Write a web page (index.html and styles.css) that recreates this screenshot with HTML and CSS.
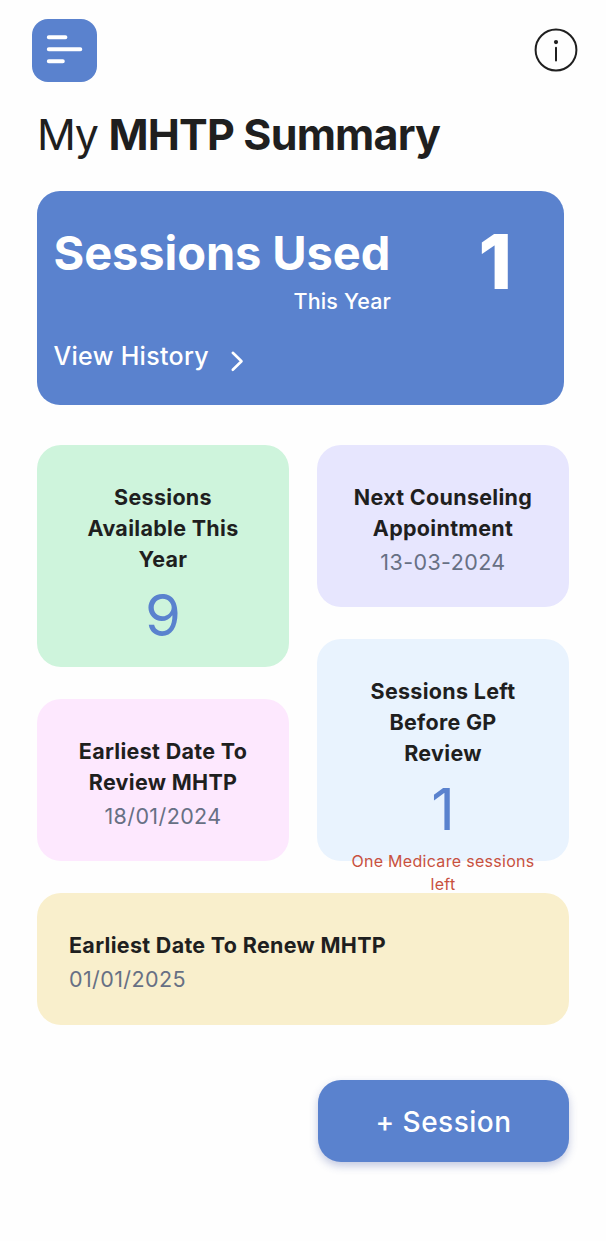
FILE: index.html
```html
<!DOCTYPE html>
<html lang="en">

<head>
    <meta charset="utf-8" />
    <meta name="viewport" content="width=device-width, initial-scale=1.0">
    <title>My MHTP Summary</title>
    <link rel="stylesheet" href="styles.css">
</head>

<body>
    <header>
        <button type="button" class="menu_btn" aria-label="Menu">
            <svg width="65" height="63" viewBox="0 0 65 63">
                <path d="M16.8 18.2H33.4M16.8 30.2H48.3M16.8 42.2H30.8" />
            </svg>
        </button>
        <a href="#" class="info_btn" aria-label="Info">
            <svg width="44" height="44" viewBox="0 0 44 44">
                <circle cx="22" cy="22" r="20.4" />
                <path d="M22 19.7V32.6" />
                <circle class="dot" cx="22" cy="14.1" r="2.1" />
            </svg>
        </a>
    </header>
    <main>
        <h1 class="title">My <b>MHTP Summary</b></h1>
        <section class="used_card">
            <div class="used_info">
                <h2>Sessions Used</h2>
                <p class="used_year">This Year</p>
                <a href="#" class="history">
                    <span>View History</span>
                    <svg width="14" height="22" viewBox="0 0 14 22">
                        <path d="M2.8 2.8L11.5 11.3L2.8 19.8" />
                    </svg>
                </a>
            </div>
            <span class="used_num">1</span>
        </section>
        <section class="cards">
            <div class="col">
                <div class="card card_big green">
                    <h3>Sessions Available This Year</h3>
                    <p class="num">9</p>
                </div>
                <div class="card pink">
                    <h3>Earliest Date To Review MHTP</h3>
                    <p class="date">18/01/2024</p>
                </div>
            </div>
            <div class="col">
                <div class="card purple">
                    <h3>Next Counseling Appointment</h3>
                    <p class="date">13-03-2024</p>
                </div>
                <div class="card card_big blue">
                    <h3>Sessions Left Before GP Review</h3>
                    <p class="num">1</p>
                    <p class="warn">One Medicare sessions left</p>
                </div>
            </div>
        </section>
        <section class="card card_wide yellow">
            <h3>Earliest Date To Renew MHTP</h3>
            <p class="date">01/01/2025</p>
        </section>
        <button type="button" class="add_btn">+ Session</button>
    </main>
</body>

</html>
```

FILE: styles.css
```css
* {
    box-sizing: border-box;
}

html,
body {
    padding: 0;
    margin: 0;
    width: 100%;
    height: 100%;
    background-color: #fefefe;
}

body,
button {
    font-family: Inter, "Liberation Sans", sans-serif;
    color: #1f1f1f;
}

h1,
h2,
h3,
p {
    margin: 0;
}

a {
    color: inherit;
    text-decoration: none;
}

button {
    outline: none;
    border: none;
    padding: 0;
}

svg {
    display: block;
    fill: none;
    stroke-linecap: round;
    stroke-linejoin: round;
}

header {
    display: flex;
    justify-content: space-between;
    align-items: center;
    padding: 18.5px 28px 0 32px;
}

.menu_btn {
    width: 65px;
    height: 63px;
    border-radius: 16px;
    background-color: #5a82ce;
}

.menu_btn svg {
    stroke: #fff;
    stroke-width: 4;
}

.info_btn svg {
    stroke: #1f1f1f;
    stroke-width: 2;
}

.info_btn .dot {
    fill: #1f1f1f;
    stroke: none;
}

main {
    display: flex;
    flex-direction: column;
    padding: 0 37px;
}

.title {
    margin-top: 25px;
    font-size: 43px;
    line-height: 54px;
    font-weight: 400;
    letter-spacing: -1.3px;
}

.title b {
    font-weight: 700;
    letter-spacing: -.8px;
}

.used_card {
    display: flex;
    width: 527px;
    height: 214px;
    margin-top: 30.5px;
    padding: 32px 52px 0 16.5px;
    justify-content: space-between;
    border-radius: 23px;
    background-color: #5a82ce;
    color: #fff;
}

.used_info {
    width: 337.5px;
}

.used_info h2 {
    font-size: 47px;
    line-height: 59px;
    font-weight: 700;
    letter-spacing: -.1px;
    white-space: nowrap;
}

.used_year {
    margin-top: 4px;
    font-size: 21.5px;
    line-height: 31px;
    font-weight: 500;
    letter-spacing: .15px;
    text-align: right;
}

.history {
    display: flex;
    margin-top: 21px;
    align-items: center;
    gap: 21px;
    font-size: 25px;
    line-height: 36px;
    font-weight: 500;
    letter-spacing: .3px;
}

.history svg {
    margin-top: 10px;
    stroke: #fff;
    stroke-width: 2.6;
}

.used_num {
    font-size: 76px;
    line-height: 76px;
    font-weight: 800;
}

.cards {
    display: flex;
    width: 532px;
    margin-top: 40px;
    justify-content: space-between;
}

.col {
    display: flex;
    flex-direction: column;
    width: 252px;
    gap: 32px;
}

.card {
    height: 162px;
    padding: 36.5px 32px 0;
    border-radius: 24px;
    text-align: center;
}

.card_big {
    height: 222px;
}

.card_wide {
    width: 532px;
    height: 132px;
    margin-top: 32px;
    text-align: left;
}

.card h3 {
    font-size: 21.5px;
    line-height: 31.1px;
    font-weight: 700;
    letter-spacing: .3px;
}

.date {
    margin-top: 3px;
    font-size: 21.5px;
    line-height: 31px;
    letter-spacing: .4px;
    color: #677084;
}

.num {
    margin-top: 1px;
    font-size: 58px;
    line-height: 78px;
    font-weight: 400;
    color: #5a82ce;
}

.warn {
    margin-top: 2px;
    font-size: 16px;
    line-height: 23.5px;
    letter-spacing: .3px;
    color: #c8513f;
}

.green {
    background-color: #cef4dc;
}

.pink {
    background-color: #fde8fe;
}

.purple {
    background-color: #e7e6fe;
}

.blue {
    background-color: #e9f3fe;
}

.yellow {
    background-color: #f9efcc;
}

.add_btn {
    width: 251px;
    height: 82px;
    margin: 55px 0 0 281px;
    padding-top: 1px;
    border-radius: 23px;
    background-color: #5a82ce;
    box-shadow: 0 4px 8px rgba(60, 80, 160, .3);
    color: #fff;
    font-size: 28px;
    font-weight: 500;
    letter-spacing: .5px;
}
```
